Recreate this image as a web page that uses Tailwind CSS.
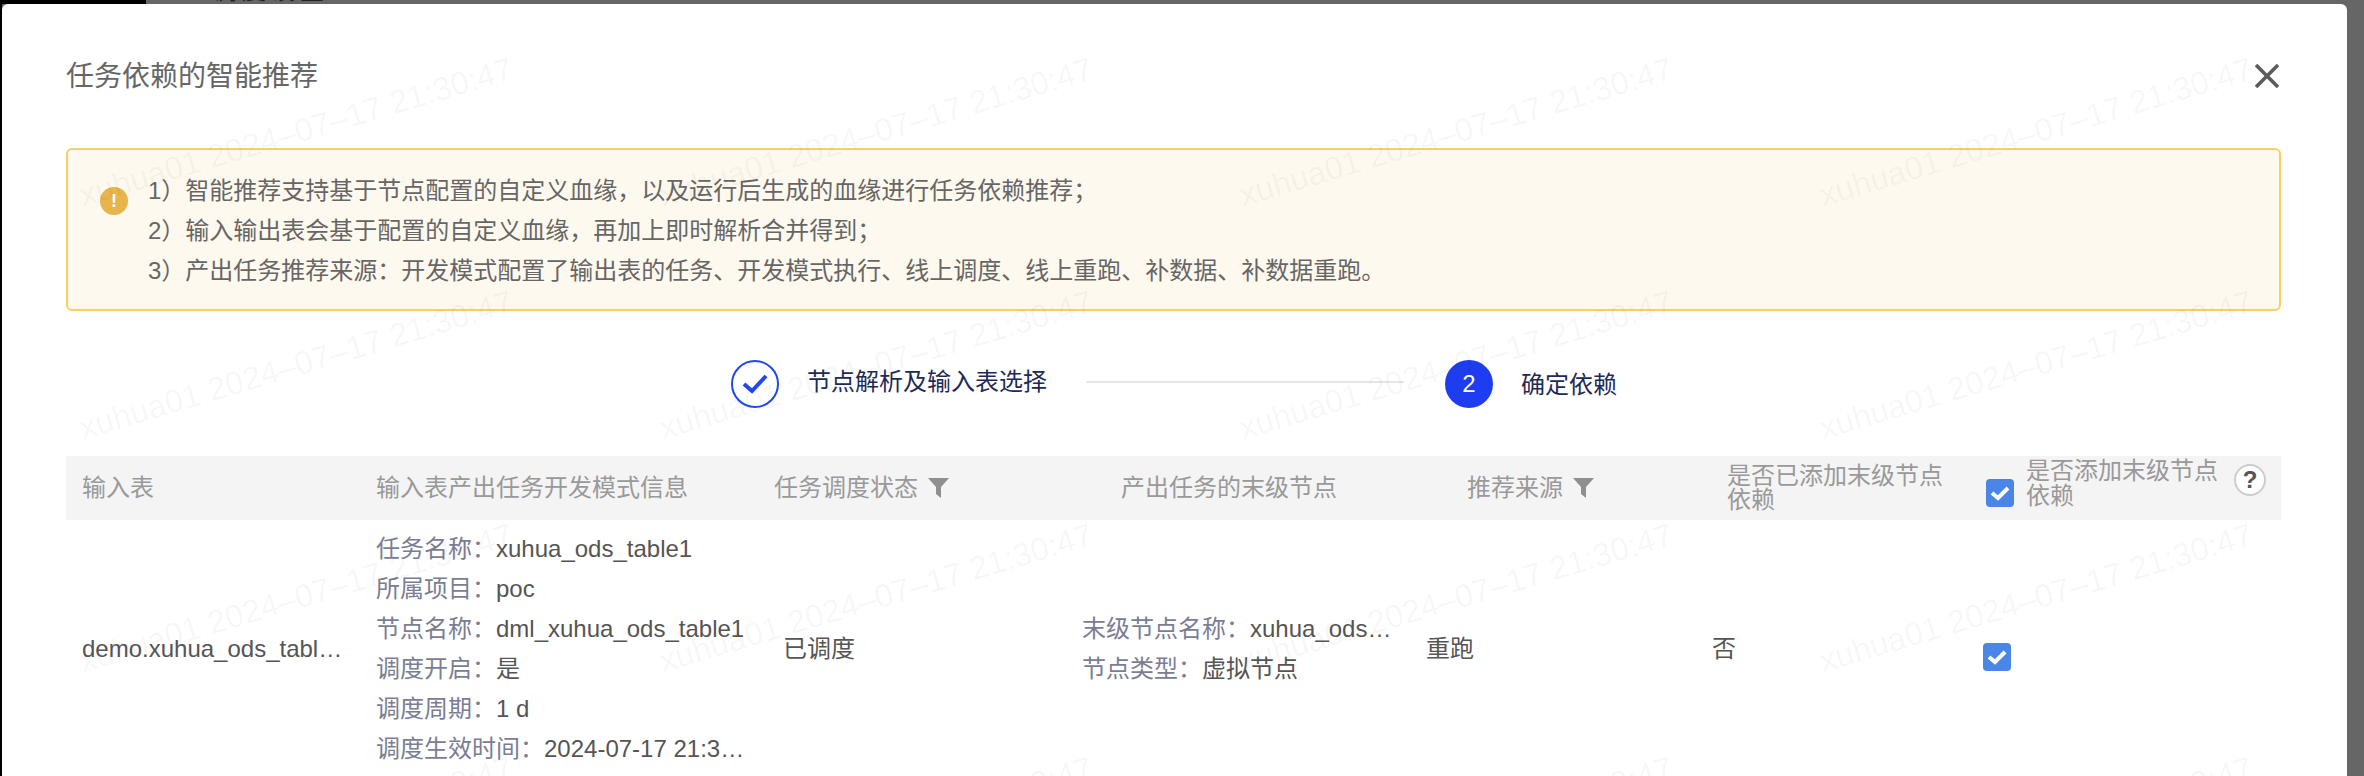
<!DOCTYPE html>
<html lang="zh-CN">
<head>
  <meta charset="UTF-8" />
  <meta name="viewport" content="width=device-width, initial-scale=1.0" />
  <title>任务依赖的智能推荐</title>
  <script src="https://cdn.jsdelivr.net/npm/@tailwindcss/browser@4"></script>
</head>
<body class="bg-[#666666] font-['Liberation_Sans','Noto_Sans_CJK_SC',sans-serif] overflow-hidden">
  <div class="relative w-[2364px] h-[776px] overflow-hidden">
    <!-- page behind the mask -->
    <div class="flex h-[4px] overflow-hidden">
      <div class="w-[146px] bg-black"></div>
      <div class="pl-[67px] -mt-[21px] text-[24px] leading-[24px] tracking-[5px] text-[#222222]">调度设置</div>
    </div>

    <div class="flex h-[772px]">
      <div class="w-[2px] bg-black"></div>

      <!-- Modal -->
      <div class="w-[2345px] bg-white rounded-t-[6px] px-[64px]">
        <div class="flex justify-between items-start pt-[49px] h-[144px]">
          <h2 class="text-[28px] leading-[48px] text-[#666666]">任务依赖的智能推荐</h2>
          <svg class="w-[24px] h-[24px] mt-[11px] mr-[4px]" viewBox="0 0 24 24" fill="none" stroke="#5c5c5c" stroke-width="3.6">
            <path d="M1 1 L23 23 M23 1 L1 23" />
          </svg>
        </div>

        <!-- Notice -->
        <div class="flex items-start w-[2215px] h-[163px] border-2 border-[#f8cf60] bg-[#fef9ee] rounded-[6px] pl-[32px] pt-[21px] text-[24px] leading-[40px] text-[#666666]">
          <div class="flex items-center justify-center w-[28px] h-[28px] mt-[16px] rounded-full bg-[#e8b44c] text-white text-[18px] leading-[28px] font-bold">!</div>
          <div class="ml-[20px]">
            <p>1）智能推荐支持基于节点配置的自定义血缘，以及运行后生成的血缘进行任务依赖推荐；</p>
            <p>2）输入输出表会基于配置的自定义血缘，再加上即时解析合并得到；</p>
            <p>3）产出任务推荐来源：开发模式配置了输出表的任务、开发模式执行、线上调度、线上重跑、补数据、补数据重跑。</p>
          </div>
        </div>

        <!-- Steps -->
        <div class="flex items-center h-[145px] pl-[665px] text-[24px] text-[#1e2a55]">
          <div class="flex items-center justify-center w-[48px] h-[48px] rounded-full border-2 border-[#2246f0]">
            <svg class="w-[26px] h-[22px]" viewBox="0 0 26 22" fill="none" stroke="#2246f0" stroke-width="4"><path d="M2 11 L10 18 L24 3" /></svg>
          </div>
          <span class="ml-[28px] -mt-[4px]">节点解析及输入表选择</span>
          <div class="ml-[39px] w-[318px] h-[2px] bg-[#e6e6ee] -mt-[4px]"></div>
          <div class="ml-[41px] flex items-center justify-center w-[48px] h-[48px] rounded-full bg-[#1f3df0] text-white">2</div>
          <span class="ml-[28px] mt-[2px]">确定依赖</span>
        </div>

        <!-- Table header -->
        <div class="grid grid-cols-[310px_398px_347px_346px_260px_259px_1fr] items-center w-[2215px] h-[64px] bg-[#f4f4f4] text-[24px] leading-[24px] text-[#999999]">
          <div class="pl-[16px]">输入表</div>
          <div>输入表产出任务开发模式信息</div>
          <div class="flex items-center gap-[10px]">任务调度状态
            <svg class="w-[21px] h-[20px]" viewBox="0 0 21 20" fill="#8f8f8f"><path d="M0 0 H21 L13 9 V20 L8 16 V9 Z" /></svg>
          </div>
          <div>产出任务的末级节点</div>
          <div class="flex items-center gap-[10px]">推荐来源
            <svg class="w-[21px] h-[20px]" viewBox="0 0 21 20" fill="#8f8f8f"><path d="M0 0 H21 L13 9 V20 L8 16 V9 Z" /></svg>
          </div>
          <div class="w-[220px]">是否已添加末级节点依赖</div>
          <div class="flex items-center">
            <div class="flex items-center justify-center w-[28px] h-[28px] rounded-[4px] bg-[#4a86e8] mt-[10px]">
              <svg class="w-[20px] h-[20px]" viewBox="0 0 20 20" fill="none" stroke="white" stroke-width="4"><path d="M2 10 L8 15 L18 5" /></svg>
            </div>
            <div class="ml-[12px] w-[208px] leading-[25px] -mt-[10px]">是否添加末级节点依赖</div>
            <div class="flex items-center justify-center shrink-0 w-[32px] h-[32px] rounded-full border-2 border-[#cccccc] bg-white text-[#555555] text-[24px] font-bold -mt-[16px]">?</div>
          </div>
        </div>

        <!-- Table row -->
        <div class="grid grid-cols-[310px_407px_299px_344px_286px_271px_1fr] items-center w-[2215px] pt-[9px] text-[24px] leading-[40px] text-[#555555]">
          <div class="pl-[16px]">demo.xuhua_ods_tabl…</div>
          <div>
            <p><span class="text-[#7a7d93]">任务名称：</span>xuhua_ods_table1</p>
            <p><span class="text-[#7a7d93]">所属项目：</span>poc</p>
            <p><span class="text-[#7a7d93]">节点名称：</span>dml_xuhua_ods_table1</p>
            <p><span class="text-[#7a7d93]">调度开启：</span>是</p>
            <p><span class="text-[#7a7d93]">调度周期：</span>1 d</p>
            <p><span class="text-[#7a7d93]">调度生效时间：</span>2024-07-17 21:3…</p>
          </div>
          <div>已调度</div>
          <div>
            <p><span class="text-[#7a7d93]">末级节点名称：</span>xuhua_ods…</p>
            <p><span class="text-[#7a7d93]">节点类型：</span>虚拟节点</p>
          </div>
          <div>重跑</div>
          <div>否</div>
          <div class="flex items-center justify-center w-[28px] h-[28px] rounded-[4px] bg-[#4a86e8] mt-[16px]">
            <svg class="w-[20px] h-[20px]" viewBox="0 0 20 20" fill="none" stroke="white" stroke-width="4"><path d="M2 10 L8 15 L18 5" /></svg>
          </div>
        </div>
      </div>
    </div>

    <!-- Watermark -->
    <div id="watermark" class="absolute left-[6px] top-[16px] grid grid-cols-[repeat(4,580px)] auto-rows-[233px] pointer-events-none"></div>
  </div>

  <script>
    const watermark = document.getElementById('watermark');
    for (let i = 0; i < 16; i++) {
      watermark.innerHTML += `
        <div class="flex items-center justify-center">
          <span class="-rotate-[16.5deg] whitespace-nowrap text-[32.5px] text-black/[0.045]">xuhua01 2024–07–17 21:30:47</span>
        </div>
      `;
    }
  </script>
</body>
</html>
